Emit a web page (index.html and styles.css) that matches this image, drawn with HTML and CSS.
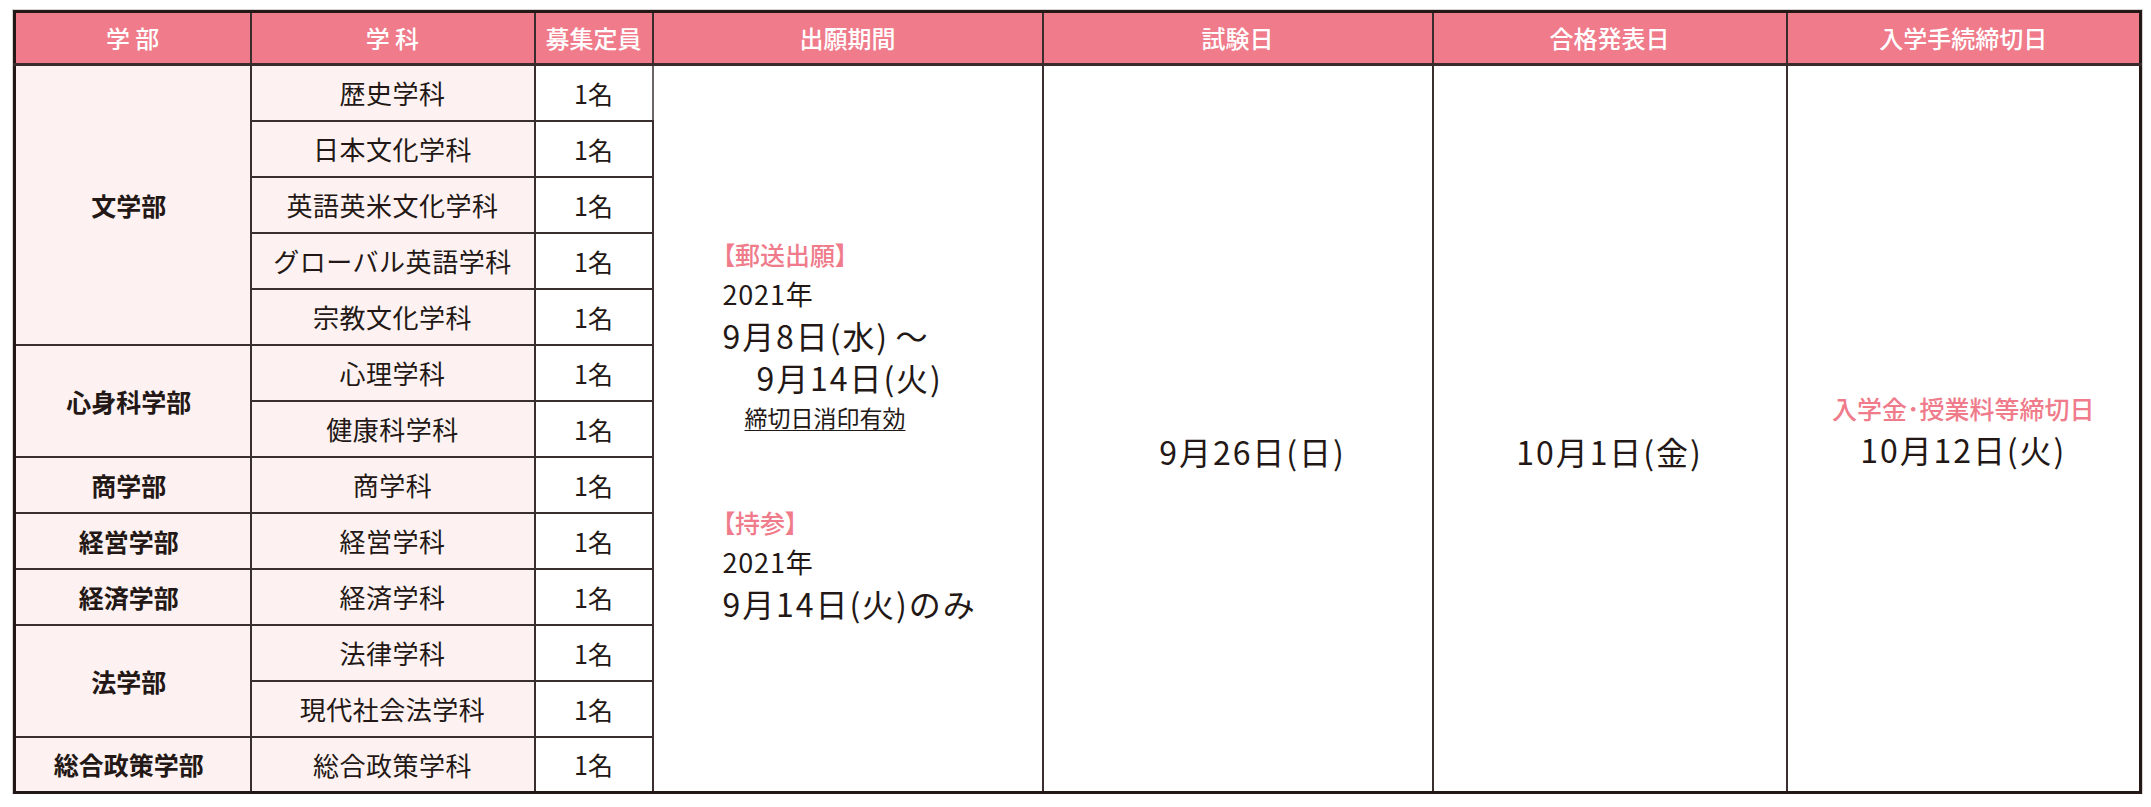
FILE: index.html
```html
<!DOCTYPE html>
<html lang="ja">
<head>
<meta charset="utf-8">
<title>募集要項</title>
<link rel="stylesheet" href="styles.css">
</head>
<body>
<table class="sched">
  <colgroup>
    <col class="c1"><col class="c2"><col class="c3"><col class="c4"><col class="c5"><col class="c6"><col class="c7">
  </colgroup>
  <thead>
    <tr class="head">
      <th class="spaced">学部</th>
      <th class="spaced">学科</th>
      <th>募集定員</th>
      <th>出願期間</th>
      <th>試験日</th>
      <th>合格発表日</th>
      <th>入学手続締切日</th>
    </tr>
  </thead>
  <tbody>
    <tr>
      <td class="fac" rowspan="5">文学部</td>
      <td class="dep">歴史学科</td>
      <td class="num">1名</td>
      <td class="period" rowspan="13">
        <div class="pblock">
          <div class="pl label">【郵送出願】</div>
          <div class="pl yr">2021年</div>
          <div class="pl big">9月8日(水)<span class="tilde">～</span></div>
          <div class="pl big ind1">9月14日(火)</div>
          <div class="pl small ind2"><span class="ul">締切日消印有効</span></div>
          <div class="pl label gap">【持参】</div>
          <div class="pl yr">2021年</div>
          <div class="pl big">9月14日(火)のみ</div>
        </div>
      </td>
      <td class="date exam" rowspan="13">9月26日(日)</td>
      <td class="date" rowspan="13">10月1日(金)</td>
      <td class="date2" rowspan="13">
        <div class="note">入学金･授業料等締切日</div>
        <div class="dl">10月12日(火)</div>
      </td>
    </tr>
    <tr><td class="dep">日本文化学科</td><td class="num">1名</td></tr>
    <tr><td class="dep">英語英米文化学科</td><td class="num">1名</td></tr>
    <tr><td class="dep">グローバル英語学科</td><td class="num">1名</td></tr>
    <tr><td class="dep">宗教文化学科</td><td class="num">1名</td></tr>
    <tr><td class="fac" rowspan="2">心身科学部</td><td class="dep">心理学科</td><td class="num">1名</td></tr>
    <tr><td class="dep">健康科学科</td><td class="num">1名</td></tr>
    <tr><td class="fac">商学部</td><td class="dep">商学科</td><td class="num">1名</td></tr>
    <tr><td class="fac">経営学部</td><td class="dep">経営学科</td><td class="num">1名</td></tr>
    <tr><td class="fac">経済学部</td><td class="dep">経済学科</td><td class="num">1名</td></tr>
    <tr><td class="fac" rowspan="2">法学部</td><td class="dep">法律学科</td><td class="num">1名</td></tr>
    <tr><td class="dep">現代社会法学科</td><td class="num">1名</td></tr>
    <tr><td class="fac">総合政策学部</td><td class="dep">総合政策学科</td><td class="num">1名</td></tr>
  </tbody>
</table>
</body>
</html>
```
FILE: styles.css
```css
html, body {
  margin: 0;
  padding: 0;
  background: #ffffff;
}
body {
  font-family: "Noto Sans CJK JP", "Noto Sans", sans-serif;
  color: #231815;
}
.sched {
  margin: 10px 0 0 13px;
  width: 2129px;
  table-layout: fixed;
  border-collapse: collapse;
  border: 3px solid #231815;
  outline: 1px solid #d6d3d3;
}
.c1 { width: 236px; }
.c2 { width: 284px; }
.c3 { width: 118px; }
.c4 { width: 390px; }
.c5 { width: 390px; }
.c6 { width: 354px; }
.c7 { width: 354px; }

.head th {
  height: 50px;
  padding: 0;
  background: #ef7b8b;
  color: #ffffff;
  font-size: 24px;
  font-weight: 500;
  border: 2px solid #3a2c2c;
  border-bottom-width: 3px;
  line-height: 1;
}
.head th.spaced {
  letter-spacing: 0.22em;
  text-indent: 0.22em;
}
tbody tr {
  height: 56px;
}
tbody td {
  padding: 0;
  border: 2px solid #3a2f2f;
  text-align: center;
  font-size: 26px;
  line-height: 1.2;
}
td.fac {
  background: #fdf2f1;
  font-weight: 700;
  font-size: 25px;
  padding-right: 8px;
}
td.dep {
  background: #fdf2f1;
  font-weight: 400;
  letter-spacing: 0.02em;
}
td.num {
  background: #ffffff;
  font-size: 25px;
  border-right-color: #6d6565;
}
td.period {
  text-align: left;
  vertical-align: middle;
}
.pblock {
  padding-left: 69px;
}
.pl {
  font-size: 25px;
  line-height: 40px;
  white-space: nowrap;
}
.pl.yr {
  font-size: 27px;
  letter-spacing: 0.03em;
}
.pl.label {
  color: #ef7b8b;
  font-weight: 500;
  font-feature-settings: "palt";
}
.pl.big {
  font-size: 32px;
  line-height: 42px;
  letter-spacing: 0.06em;
}
.tilde {
  margin-left: 0.2em;
}
.pl.ind1 { padding-left: 34px; }
.pl.ind2 { padding-left: 22px; }
.pl.small { font-size: 23px; line-height: 38px; }
.ul {
  text-decoration: underline;
  text-underline-offset: 3px;
  text-decoration-thickness: 1px;
}
.pl.gap { margin-top: 66px; }

td.date {
  font-size: 32px;
  letter-spacing: 0.06em;
  padding-top: 46px;
  vertical-align: middle;
}
td.exam {
  padding-left: 30px;
}
td.date2 {
  vertical-align: middle;
  border-left-color: #6d6565;
}
.note {
  color: #ef7b8b;
  font-size: 25px;
  font-weight: 500;
  line-height: 40px;
}
.dl {
  font-size: 32px;
  line-height: 42px;
  letter-spacing: 0.06em;
}
```
